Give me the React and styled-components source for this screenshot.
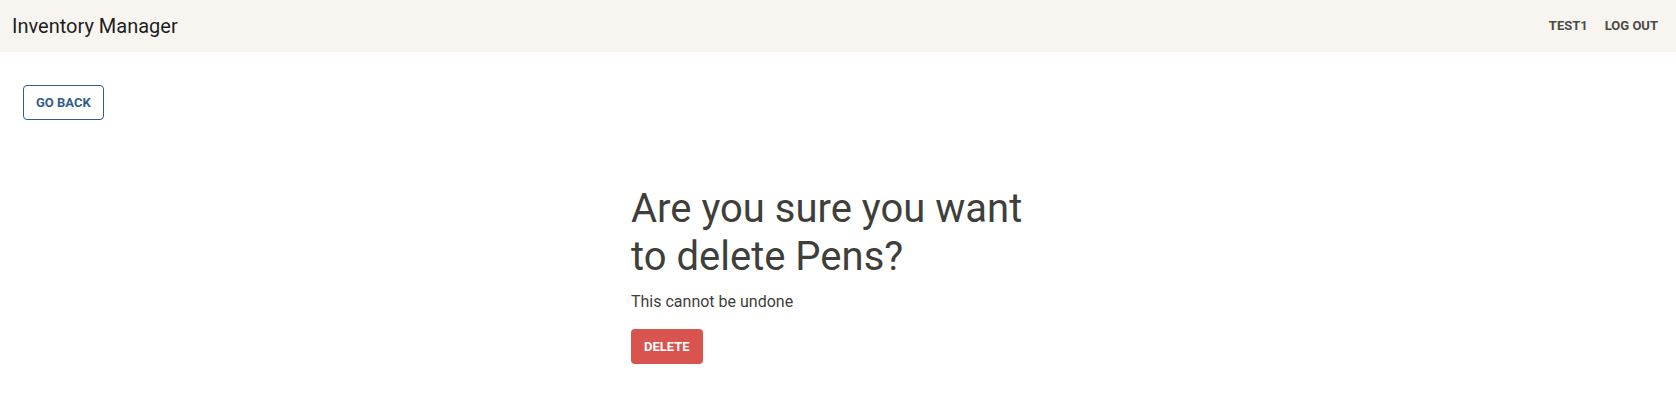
import React from "react";
import styled, { createGlobalStyle } from "styled-components";

const GlobalStyle = createGlobalStyle`
  html, body { margin: 0; padding: 0; background: #ffffff; }
  body {
    font-family: Roboto, "Liberation Sans", Arial, sans-serif;
    color: #3e3f3a;
    -webkit-font-smoothing: antialiased;
  }
  * { box-sizing: border-box; }
`;

const NavBar = styled.header`
  height: 52px;
  background: #f8f5f0;
  display: flex;
  align-items: center;
  justify-content: space-between;
  padding: 0 18px 0 12px;
`;

const Brand = styled.div`
  font-size: 20px;
  line-height: 24px;
  color: rgba(0, 0, 0, 0.9);
  font-weight: 400;
`;

const NavLinks = styled.nav`
  display: flex;
  align-items: center;
  gap: 17px;
`;

const NavLink = styled.a`
  font-size: 13px;
  line-height: 22px;
  font-weight: 700;
  text-transform: uppercase;
  color: #4a4a46;
  text-decoration: none;
  cursor: pointer;
`;

const Main = styled.main`
  padding: 33px 23px 40px;
`;

const Button = styled.button`
  font-family: inherit;
  font-size: 13px;
  line-height: 17px;
  font-weight: 700;
  text-transform: uppercase;
  border-radius: 4px;
  cursor: pointer;
  padding: ${(p) => (p.$variant === "outline" ? "8px 12px" : "9px 13px")};
  border: ${(p) => (p.$variant === "outline" ? "1px solid #325d88" : "none")};
  background: ${(p) => (p.$variant === "outline" ? "#ffffff" : "#d9534f")};
  color: ${(p) => (p.$variant === "outline" ? "#325d88" : "#ffffff")};
`;

const Confirm = styled.section`
  width: 414px;
  margin: 65px auto 0;
`;

const Heading = styled.h1`
  font-size: 40px;
  line-height: 48px;
  font-weight: 400;
  color: #3e3f3a;
  margin: 0 0 9px;
`;

const Note = styled.p`
  font-size: 16px;
  line-height: 24px;
  margin: 0 0 15px;
  color: #3e3f3a;
`;

export default function App() {
  return (
    <>
      <GlobalStyle />
      <NavBar>
        <Brand>Inventory Manager</Brand>
        <NavLinks>
          <NavLink>Test1</NavLink>
          <NavLink>Log Out</NavLink>
        </NavLinks>
      </NavBar>
      <Main>
        <Button $variant="outline">Go Back</Button>
        <Confirm>
          <Heading>Are you sure you want to delete Pens?</Heading>
          <Note>This cannot be undone</Note>
          <Button $variant="danger">Delete</Button>
        </Confirm>
      </Main>
    </>
  );
}
